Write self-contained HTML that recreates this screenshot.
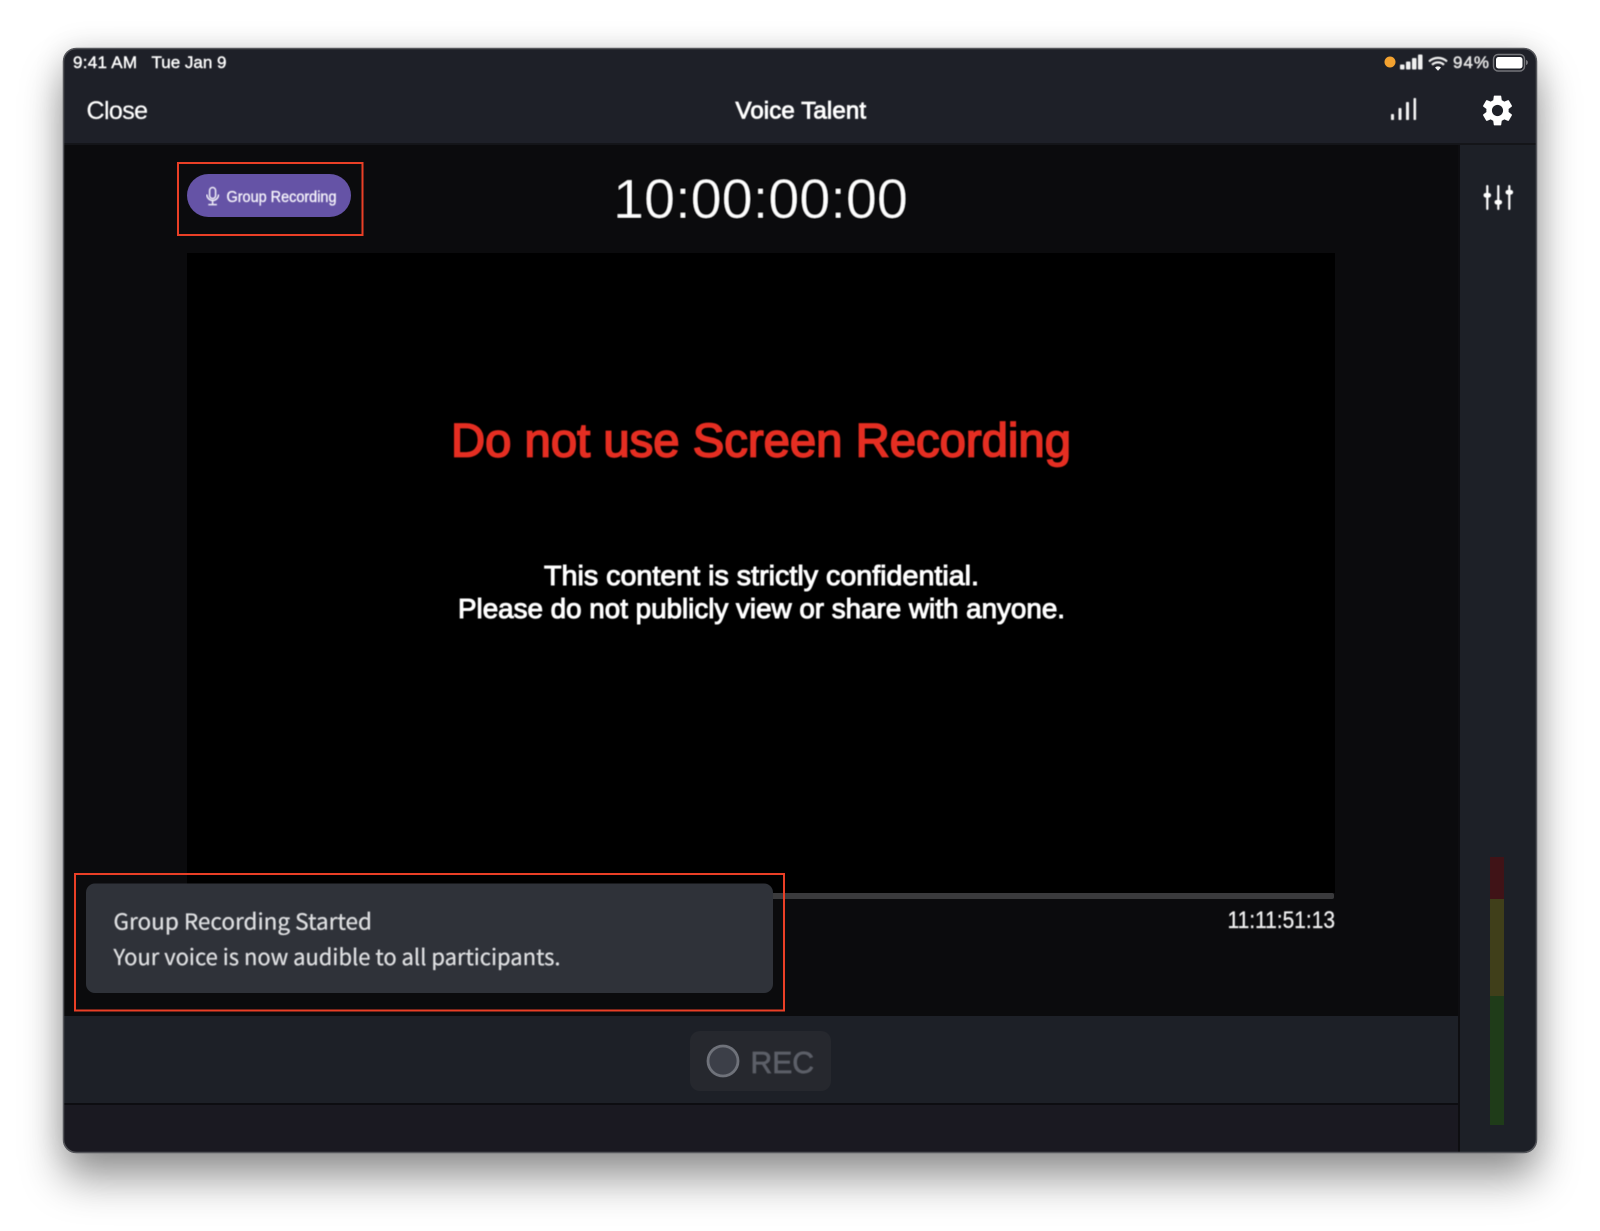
<!DOCTYPE html>
<html lang="en">
<head>
<meta charset="utf-8">
<title>Voice Talent</title>
<style>
html,body{margin:0;padding:0;background:#fff;width:1600px;height:1231px;overflow:hidden}
#shadow{position:absolute;left:63px;top:48px;width:1474px;height:1105px;border-radius:13px;box-shadow:0 26px 42px rgba(0,0,0,.40),0 0 30px rgba(0,0,0,.13)}
svg{position:absolute;left:0;top:0}
text{font-family:"Liberation Sans",sans-serif;fill:#fff}
.b{filter:url(#soft)}
.toast{font-family:"Noto Sans CJK JP","DejaVu Sans",sans-serif;fill:#dedfe1;stroke:#dedfe1;stroke-width:.3}
</style>
</head>
<body>
<div id="shadow"></div>
<svg width="1600" height="1231" viewBox="0 0 1600 1231" xmlns="http://www.w3.org/2000/svg">
<defs>
<filter id="soft" x="-5%" y="-20%" width="110%" height="140%"><feGaussianBlur stdDeviation="0.45"/></filter>
<clipPath id="win"><rect x="63" y="48" width="1474" height="1105" rx="13"/></clipPath>
</defs>
<g clip-path="url(#win)">
<rect x="63" y="48" width="1474" height="1105" fill="#1e2028"/>
<rect x="63" y="144" width="1396" height="872" fill="#0b0b0d"/>
<rect x="63" y="143" width="1474" height="2" fill="#141519"/>
<rect x="1459" y="145" width="78" height="1008" fill="#1d2027"/>
<rect x="1458" y="145" width="2" height="1008" fill="#0e0e11"/>
<rect x="187" y="253" width="1148" height="640" fill="#000"/>
<rect x="187" y="893" width="1147" height="6" rx="2" fill="#3a3a3c"/>
<rect x="63" y="1016" width="1395" height="87" fill="#1d2027"/>
<rect x="63" y="1103" width="1395" height="2" fill="#0d0d11"/>
<rect x="63" y="1105" width="1395" height="48" fill="#1a1921"/>
<rect x="1490" y="857" width="14" height="42" fill="#401317"/>
<rect x="1490" y="899" width="14" height="97" fill="#403f1a"/>
<rect x="1490" y="996" width="14" height="129" fill="#1f3c19"/>
</g>
<rect x="63.5" y="48.5" width="1473" height="1104" rx="13" fill="none" stroke="#55565b" stroke-width="1.5"/>

<g class="b">
<text x="73" y="68" font-size="17" textLength="64" style="stroke:#fff;stroke-width:.4">9:41 AM</text>
<text x="151.5" y="68" font-size="17" textLength="75" style="stroke:#fff;stroke-width:.4">Tue Jan 9</text>
<text x="86.5" y="119" font-size="25" textLength="61.5" style="stroke:#fff;stroke-width:.2">Close</text>
<text x="735.5" y="118.5" font-size="24" textLength="130.5" style="stroke:#fff;stroke-width:.85">Voice Talent</text>
<text x="613" y="218" font-size="56" textLength="295" lengthAdjust="spacingAndGlyphs" style="stroke:#0b0b0d;stroke-width:.9">10:00:00:00</text>
<text x="451" y="456.5" font-size="47" textLength="620" lengthAdjust="spacingAndGlyphs" style="fill:#e52d20;stroke:#e52d20;stroke-width:1.7">Do not use Screen Recording</text>
<text x="544" y="585" font-size="28" textLength="435" lengthAdjust="spacingAndGlyphs" style="stroke:#fff;stroke-width:1">This content is strictly confidential.</text>
<text x="458" y="618" font-size="28" textLength="607" lengthAdjust="spacingAndGlyphs" style="stroke:#fff;stroke-width:1">Please do not publicly view or share with anyone.</text>
<text x="1227.5" y="928" font-size="24" textLength="107.5" lengthAdjust="spacingAndGlyphs" style="fill:#f0f0f0;stroke:#f0f0f0;stroke-width:.3">11:11:51:13</text>
<text x="1453" y="68" font-size="17" textLength="36" style="fill:#e6e6e6;stroke:#e6e6e6;stroke-width:.5">94%</text>
</g>

<!-- Status icons -->
<circle cx="1390" cy="62" r="5.5" fill="#f3a230"/>
<g fill="#f0f0f0" class="b">
<rect x="1400" y="64.5" width="4.5" height="5" rx="1"/>
<rect x="1406" y="61.5" width="4.5" height="8" rx="1"/>
<rect x="1412" y="58" width="4.5" height="11.5" rx="1"/>
<rect x="1418" y="54.5" width="4.5" height="15" rx="1"/>
</g>
<g fill="none" stroke="#f0f0f0" stroke-width="2.2" class="b">
<path d="M1429 61.5a13 13 0 0 1 18 0"/>
<path d="M1432 64.8a8.6 8.6 0 0 1 12 0"/>
</g>
<path d="M1435 67.6a4.4 4.4 0 0 1 6 0l-3 3.2z" fill="#f0f0f0"/>
<rect x="1493.5" y="54.5" width="31" height="16.5" rx="4.5" fill="none" stroke="#75767b" stroke-width="1.4"/>
<rect x="1496" y="57" width="26.5" height="11.5" rx="2.5" fill="#fff"/>
<path d="M1526 60v5a2.6 2.6 0 0 0 0-5z" fill="#75767b"/>

<!-- Signal icon -->
<g fill="#f2f2f2" class="b">
<rect x="1391" y="114" width="3" height="6" rx=".8"/>
<rect x="1398.5" y="108" width="3" height="12" rx=".8"/>
<rect x="1406" y="102" width="3" height="18" rx=".8"/>
<rect x="1413.5" y="98" width="2.6" height="22" rx=".8"/>
</g>

<!-- Gear -->
<path transform="translate(1478.9 91.9) scale(1.55)" fill="#fff" d="M19.14 12.94c.04-.3.06-.61.06-.94 0-.32-.02-.64-.07-.94l2.03-1.58c.18-.14.23-.41.12-.61l-1.92-3.32c-.12-.22-.37-.29-.59-.22l-2.39.96c-.5-.38-1.03-.7-1.62-.94l-.36-2.54c-.04-.24-.24-.41-.48-.41h-3.84c-.24 0-.43.17-.47.41l-.36 2.54c-.59.24-1.13.57-1.62.94l-2.39-.96c-.22-.08-.47 0-.59.22L2.74 8.87c-.12.21-.08.47.12.61l2.03 1.58c-.05.3-.09.63-.09.94s.02.64.07.94l-2.03 1.58c-.18.14-.23.41-.12.61l1.92 3.32c.12.22.37.29.59.22l2.39-.96c.5.38 1.03.7 1.62.94l.36 2.54c.05.24.24.41.48.41h3.84c.24 0 .44-.17.47-.41l.36-2.54c.59-.24 1.13-.56 1.62-.94l2.39.96c.22.08.47 0 .59-.22l1.92-3.32c.12-.22.07-.47-.12-.61l-2.01-1.58zM12 15.6c-1.98 0-3.6-1.62-3.6-3.6s1.62-3.6 3.6-3.6 3.6 1.62 3.6 3.6-1.62 3.6-3.6 3.6z"/>

<!-- Sliders -->
<g fill="#fff" class="b">
<rect x="1486.2" y="185" width="2.2" height="25" rx="1.1"/>
<rect x="1497.2" y="185" width="2.2" height="25" rx="1.1"/>
<rect x="1508.2" y="185" width="2.2" height="25" rx="1.1"/>
<rect x="1483.5" y="193" width="7.6" height="4.6" rx="2.3"/>
<rect x="1494.5" y="200" width="7.6" height="4.6" rx="2.3"/>
<rect x="1505.5" y="190" width="7.6" height="4.6" rx="2.3"/>
</g>

<!-- Group Recording pill -->
<rect x="178" y="163" width="184.5" height="72" fill="none" stroke="#ea3f26" stroke-width="2"/>
<rect x="187" y="174" width="164" height="43" rx="21.5" fill="#6553a6"/>
<g fill="none" stroke="#f0eef8" stroke-width="1.5" class="b" transform="translate(.8 0)">
<rect x="208.8" y="187.5" width="6" height="11" rx="3"/>
<path d="M206 194.5a5.9 5.9 0 0 0 11.8 0"/>
<path d="M211.8 200.8v3.2M207.5 204.6h8.6"/>
</g>
<text class="b" x="226.5" y="202" font-size="15.5" textLength="110" lengthAdjust="spacingAndGlyphs" style="fill:#f5f3fb;stroke:#f5f3fb;stroke-width:.35">Group Recording</text>

<!-- Toast -->
<rect x="86" y="883.5" width="687" height="109.5" rx="9" fill="#2f3239"/>
<rect x="75" y="874" width="709" height="136.5" fill="none" stroke="#ea3f26" stroke-width="2"/>
<g class="b">
<text class="toast" x="113.5" y="929.5" font-size="22" textLength="258.5" lengthAdjust="spacingAndGlyphs">Group Recording Started</text>
<text class="toast" x="113.5" y="965" font-size="22" textLength="447" lengthAdjust="spacingAndGlyphs">Your voice is now audible to all participants.</text>
</g>

<!-- REC -->
<rect x="690" y="1031" width="141" height="60" rx="10" fill="#26282e"/>
<circle cx="723" cy="1061" r="15" fill="#3c3f48" stroke="#6f727a" stroke-width="2.8"/>
<text class="b" x="750.5" y="1073" font-size="31" textLength="63.5" lengthAdjust="spacingAndGlyphs" style="fill:#5c5f67;stroke:#5c5f67;stroke-width:.7">REC</text>
</svg>
</body>
</html>
